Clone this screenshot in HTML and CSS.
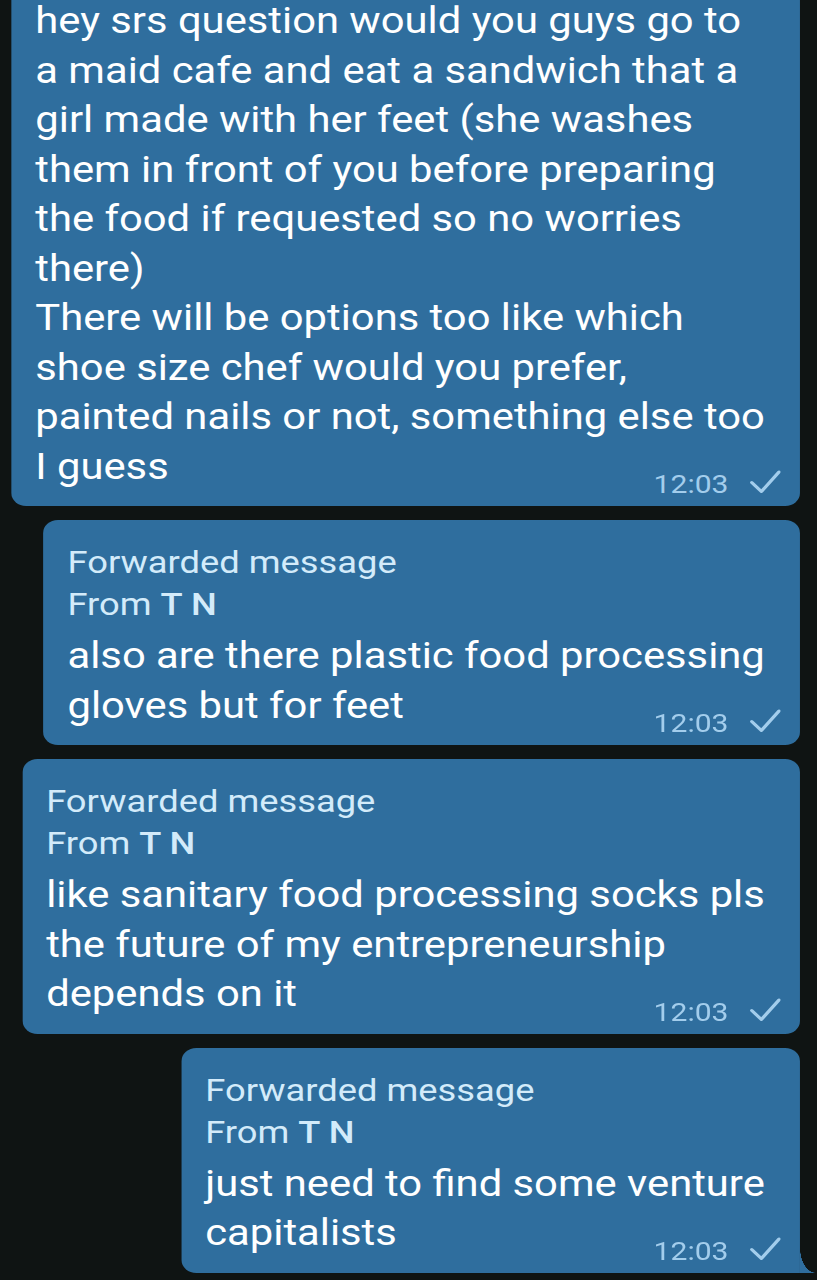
FILE: index.html
```html
<!DOCTYPE html>
<html lang="en">
<head>
<meta charset="utf-8">
<title>Chat</title>
<link rel="stylesheet" href="styles.css">
</head>
<body>
<div class="chat">
  <div class="bubble first">
    <p class="body">hey srs question would you guys go to<br>a maid cafe and eat a sandwich that a<br>girl made with her feet (she washes<br>them in front of you before preparing<br>the food if requested so no worries<br>there)<br>There will be options too like which<br>shoe size chef would you prefer,<br>painted nails or not, something else too<br>I guess</p>
    <div class="meta"><span class="time">12:03</span><svg class="check" viewBox="0 0 27 24" width="27" height="24"><path d="M1.5 12.5 L10 21.5 L25.5 2"/></svg></div>
  </div>
  <div class="bubble fwd">
    <div class="fwd-head">Forwarded message<br>From <b>T N</b></div>
    <p class="body">also are there plastic food processing<br>gloves but for feet</p>
    <div class="meta"><span class="time">12:03</span><svg class="check" viewBox="0 0 27 24" width="27" height="24"><path d="M1.5 12.5 L10 21.5 L25.5 2"/></svg></div>
  </div>
  <div class="bubble fwd">
    <div class="fwd-head">Forwarded message<br>From <b>T N</b></div>
    <p class="body">like sanitary food processing socks pls<br>the future of my entrepreneurship<br>depends on it</p>
    <div class="meta"><span class="time">12:03</span><svg class="check" viewBox="0 0 27 24" width="27" height="24"><path d="M1.5 12.5 L10 21.5 L25.5 2"/></svg></div>
  </div>
  <div class="bubble fwd last">
    <div class="fwd-head">Forwarded message<br>From <b>T N</b></div>
    <p class="body">just need to find some venture<br>capitalists</p>
    <div class="meta"><span class="time">12:03</span><svg class="check" viewBox="0 0 27 24" width="27" height="24"><path d="M1.5 12.5 L10 21.5 L25.5 2"/></svg></div>
  </div>
</div>
</body>
</html>
```

FILE: styles.css
```css
html, body {
  margin: 0;
  padding: 0;
  background: #0f1413;
  overflow: hidden;
  height: 1280px;
}

.chat {
  width: 720px;
  transform: scaleX(1.1347);
  transform-origin: 0 0;
  display: flex;
  flex-direction: column;
  align-items: flex-end;
  gap: 14px;
  font-family: Roboto, "Noto Sans", sans-serif;
}

.bubble {
  position: relative;
  margin-right: 15px;
  background: #2f6e9e;
  border-radius: 13px;
  padding: 21px 31px 15px 21px;
  color: #ffffff;
}

.bubble.first {
  margin-top: -16px;
  padding-top: 12px;
}

.bubble.last {
  border-bottom-right-radius: 0;
}

.bubble.last::after {
  content: "";
  position: absolute;
  right: -14px;
  bottom: 0;
  width: 14px;
  height: 25px;
  background: radial-gradient(ellipse 14px 25px at 100% 0, transparent 98%, #2f6e9e 100%);
}

.body {
  margin: 0;
  font-size: 36.8px;
  line-height: 49.5px;
  white-space: nowrap;
}

.fwd .body {
  margin-top: 6px;
}

.fwd-head {
  font-size: 32px;
  line-height: 42px;
  color: #d3ebfa;
  white-space: nowrap;
}

.fwd-head b {
  font-weight: 500;
}

.meta {
  position: absolute;
  right: 17px;
  bottom: 9px;
  display: flex;
  align-items: flex-end;
  gap: 19px;
}

.time {
  font-size: 26.5px;
  line-height: 27px;
  color: #a3cdec;
}

.check {
  display: block;
  margin-bottom: 3px;
}

.check path {
  fill: none;
  stroke: #a3cdec;
  stroke-width: 3;
  stroke-linecap: round;
  stroke-linejoin: round;
}
```
